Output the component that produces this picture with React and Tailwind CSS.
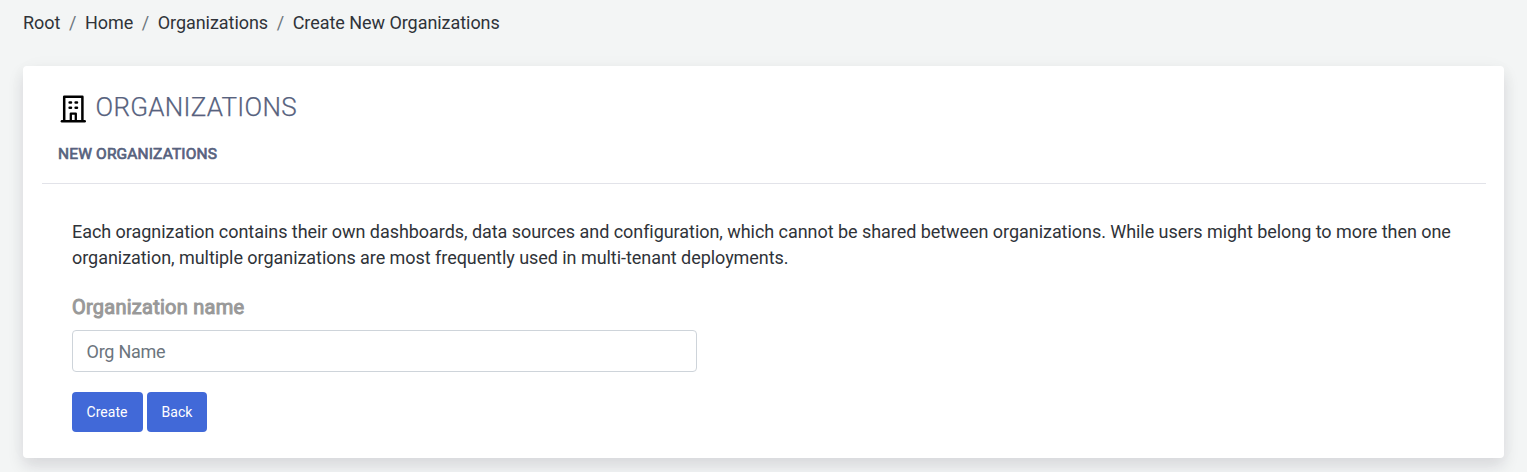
import React from "react";

const crumbs = ["Root", "Home", "Organizations", "Create New Organizations"];

function BuildingIcon() {
  return (
    <svg className="h-[28px] w-[26px] shrink-0" viewBox="0 0 26 28" fill="none" stroke="#000">
      <path d="M4.2 26V1.7h18.2V26" strokeWidth="2.5" strokeLinejoin="round" />
      <path d="M1.9 26.2h22.8" strokeWidth="2.5" strokeLinecap="round" />
      <path d="M10.8 26v-7.4h5V26" strokeWidth="2.3" strokeLinejoin="round" />
      <path d="M9.6 7.6h1.4M15.6 7.6h1.4M9.6 12.8h1.4M15.6 12.8h1.4" strokeWidth="2.5" strokeLinecap="round" />
    </svg>
  );
}

export default function App() {
  return (
    <div className="h-[472px] overflow-hidden bg-[#f3f5f5] px-[23px] font-['Roboto',sans-serif] text-[18px] tracking-[-0.048px] text-[#2f3339]">
      <nav className="flex h-[66px] pt-[9px] leading-[27px] tracking-[-0.05px]">
        {crumbs.map((c, i) => (
          <span key={c} className="flex">
            {i > 0 && <span className="px-[8.6px] text-[#6c757d]">/</span>}
            {c}
          </span>
        ))}
      </nav>
      <main className="h-[392px] rounded-[4px] bg-white pr-[18px] pl-[19px] shadow-[0_8px_16px_rgba(24,20,45,0.12),0_0_24px_rgba(24,20,45,0.02)]">
        <header className="h-[118px] border-b border-[#e2e3e9] pl-4">
          <div className="flex items-start pt-[25px] pl-[2px]">
            <div className="pt-[4px]"><BuildingIcon /></div>
            <h1 className="ml-[9.5px] text-[26px] leading-[32px] font-light tracking-[0.27px] text-[#57627e] [-webkit-text-stroke:0.25px_#57627e]">ORGANIZATIONS</h1>
          </div>
          <h2 className="mt-[19px] text-[15.5px] leading-[25px] font-normal tracking-[0.15px] text-[#57627e] [-webkit-text-stroke:0.7px_#57627e]">NEW ORGANIZATIONS</h2>
        </header>
        <section className="px-[30px] pt-[35px]">
          <p className="leading-[26px]">
            Each oragnization contains their own dashboards, data sources and configuration, which cannot be shared between organizations. While users might belong to more then one organization, multiple organizations are most frequently used in multi-tenant deployments.
          </p>
          <label htmlFor="org" className="mt-[21px] block text-[20px] leading-[30px] font-normal tracking-[0.25px] text-[#999] [-webkit-text-stroke:1px_#999]">Organization name</label>
          <input id="org" placeholder="Org Name" className="mt-[8px] block h-[42px] w-[625px] rounded-[4px] border border-[#ced4da] px-[13.5px] tracking-[-0.25px] placeholder:text-[#6c757d]" />
          <div className="mt-5 flex gap-1 text-[14px] tracking-[0px] text-white">
            <button className="h-10 w-[71px] rounded-[4px] bg-[#4169d8] pr-px">Create</button>
            <button className="h-10 w-[60px] rounded-[4px] bg-[#4169d8]">Back</button>
          </div>
        </section>
      </main>
    </div>
  );
}
